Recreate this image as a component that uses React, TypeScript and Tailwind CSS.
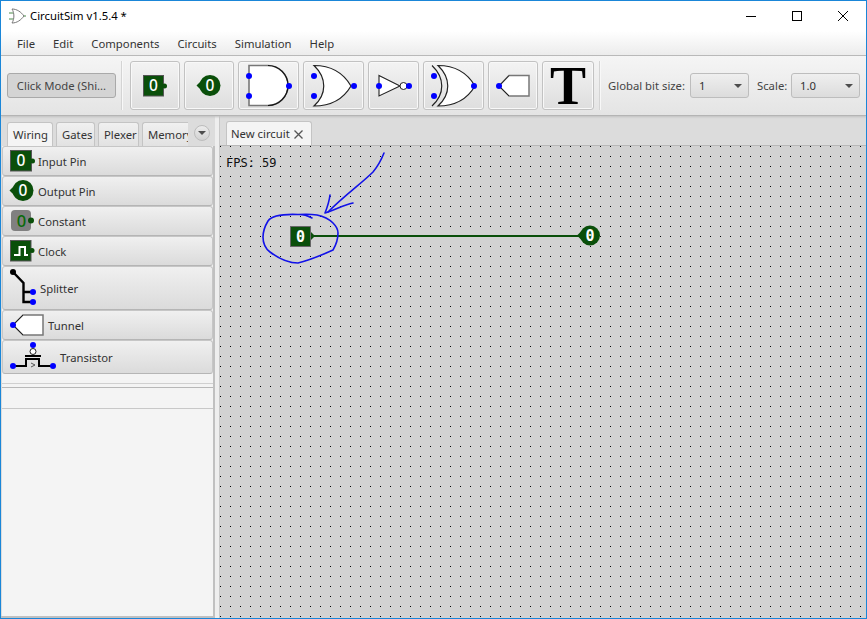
import type { ReactNode } from 'react';

const GREEN = '#0a4f0a';
const BLUE = '#0000ff';

const Dot = ({ x, y, r = 3 }: { x: number; y: number; r?: number }) => <circle cx={x} cy={y} r={r} fill={BLUE} />;

// every drawing uses the screenshot's own pixel coordinates in its viewBox
const Art = ({ x, y, w, h, children }: { x: number; y: number; w: number; h: number; children: ReactNode }) => (
  <svg width={w} height={h} viewBox={`${x} ${y} ${w} ${h}`} className="shrink-0 block">{children}</svg>
);

const PinText = ({ x, y, size = 15.5, fill = '#fff', mono = false }: { x: number; y: number; size?: number; fill?: string; mono?: boolean }) => (
  <text x={x} y={y} textAnchor="middle" fontSize={size} fill={fill} fontWeight={mono ? 700 : 500} fontFamily={mono ? "'DejaVu Sans Mono', monospace" : "'Noto Sans', sans-serif"}>0</text>
);

const InputPin = ({ bx, by, w = 21 }: { bx: number; by: number; w?: number }) => (
  <>
    <rect x={bx} y={by} width={w} height={20.5} fill={GREEN} stroke="#555" strokeWidth="1" />
    <circle cx={bx + w + 1} cy={by + 10.5} r={2.5} fill={GREEN} />
    <PinText x={bx + w / 2} y={by + 15.5} />
  </>
);

const OutputPin = ({ cx, cy, r = 10.5, mono = false }: { cx: number; cy: number; r?: number; mono?: boolean }) => (
  <>
    <circle cx={cx} cy={cy} r={r} fill={GREEN} />
    <path d={`M${cx - r - 3} ${cy} L${cx - r + 2} ${cy - 5} V${cy + 5} Z`} fill={GREEN} />
    <PinText x={cx} y={cy + 5.5} mono={mono} size={mono ? 15 : 15.5} />
  </>
);

const orPath = (l: number) => `M${l} 65.5 C${l + 18} 65.5 ${l + 30} 74 ${l + 37} 86 C${l + 30} 98 ${l + 18} 106 ${l} 106 C${l + 13} 94 ${l + 13} 78 ${l} 65.5 Z`;

const ToolButton = ({ w, children }: { w: number; children: ReactNode }) => (
  <div className="h-[49px] flex items-center justify-center rounded-[3px] border border-[#c2c2c2] bg-gradient-to-b from-[#f3f3f3] to-[#dedede] shadow-[inset_0_0_0_1px_#f8f8f8] overflow-hidden shrink-0" style={{ width: w }}>
    {children}
  </div>
);

const Combo = ({ value, width }: { value: string; width: string }) => (
  <div className={`${width} h-[25px] flex items-center justify-between pl-[8px] pr-[6px] rounded-[3px] border border-[#bdbdbd] bg-gradient-to-b from-[#efefef] to-[#dcdcdc] text-[11.3px] text-[#333]`}>
    <span className="pt-px">{value}</span>
    <span className="w-0 h-0 border-l-[4px] border-r-[4px] border-t-[4px] border-l-transparent border-r-transparent border-t-[#4d4d4d]" />
  </div>
);

const Row = ({ h, gap, label, art }: { h: string; gap: string; label: string; art: ReactNode }) => (
  <div className={`${h} ${gap} flex items-center pl-[6px] rounded-[3px] border border-[#c6c6c6] border-b-[#b5b5b5] bg-gradient-to-b from-[#f0f0f0] to-[#dbdbdb] text-[11.3px] text-[#333] shrink-0`}>
    {art}
    <span className="pt-[2px]">{label}</span>
  </div>
);

const Tab = ({ label, w, active = false, clipped = false }: { label: string; w: string; active?: boolean; clipped?: boolean }) => (
  <div className={`${w} h-[24px] flex items-center pt-[2px] pl-[5px] rounded-t-[3px] border border-b-0 border-[#c4c4c4] text-[11.3px] text-[#333] shrink-0 overflow-hidden whitespace-nowrap ${clipped ? 'border-r-0 rounded-tr-none' : ''} ${active ? 'bg-[#f4f4f4]' : 'bg-gradient-to-b from-[#f0f0f0] to-[#e2e2e2]'}`}>
    {label}
  </div>
);

const Canvas = () => (
  <svg className="w-full h-full block" viewBox="220 146 646 472">
    <defs>
      <pattern id="dots" x="220" y="146" width="10" height="10" patternUnits="userSpaceOnUse">
        <rect x="0" y="0" width="1" height="1" fill="#000" shapeRendering="crispEdges" />
      </pattern>
    </defs>
    <rect x="220" y="146" width="646" height="472" fill="#d2d2d2" />
    <rect x="220" y="146" width="646" height="472" fill="url(#dots)" />
    <text x="226" y="167" fontSize="12" fill="#111" fontFamily="'DejaVu Sans Mono', monospace">FPS: 59</text>
    <line x1="311" y1="236" x2="582" y2="236" stroke={GREEN} strokeWidth="2" />
    <rect x="290.5" y="226.5" width="20" height="20" fill={GREEN} stroke="#666" />
    <path d="M311 232 L315 236 L311 240 Z" fill={GREEN} />
    <PinText x={300.5} y={241.5} size={15} mono />
    <OutputPin cx={590} cy={235.5} r={10} mono />
    <g fill="none" stroke="#1212e8" strokeWidth="1.6" strokeLinecap="round" strokeLinejoin="round">
      <path d="M384 153 C380 163 378 166 373 172 C362 183 345 195 328 212" />
      <path d="M330 195 C329 203 327 208 325 213 C335 210 343 205 353 203" />
      <path d="M312 218 C308 216 304 214 298 214.5 C285 214 272 215 268 221 C265 226 263 231 263 237 C263 243 266 249 270 252 C278 258 288 263 298 263 C310 260 322 255 333 250 C336 245 338 239 338 233 C338 229 336 226 333 223 C328 218 322 216 317 215 C311 214 305 214 298 214.5" />
    </g>
  </svg>
);

export default function App() {
  return (
    <div className="w-[867px] h-[619px] flex flex-col overflow-hidden border border-[#1a86d8] bg-[#dcdcdc] font-['Noto_Sans',sans-serif]">
      {/* title bar */}
      <div className="h-[30px] bg-white flex items-center shrink-0">
        <div className="ml-[6px] mr-[4px]">
          <Art x={7} y={6} w={19} h={18}>
            <path d="M12 8 C17 8 21 11 24 15 C21 19 17 22 12 22 C14.5 18 14.5 12 12 8 Z" fill="#fff" stroke="#777" strokeWidth="1" />
            <path d="M9 12 H13 M9 18 H13 M24 15 H26" stroke="#4a8a4a" strokeWidth="1" />
          </Art>
        </div>
        <span className="text-[11.3px] text-black">CircuitSim v1.5.4 *</span>
        <div className="ml-auto flex">
          <div className="w-[46px] h-[30px] flex items-center justify-center">
            <svg width="10" height="10" viewBox="0 0 10 10"><path d="M0 5.5 H10" stroke="#000" /></svg>
          </div>
          <div className="w-[46px] h-[30px] flex items-center justify-center">
            <svg width="10" height="10" viewBox="0 0 10 10"><rect x="0.5" y="0.5" width="9" height="9" fill="none" stroke="#000" /></svg>
          </div>
          <div className="w-[46px] h-[30px] flex items-center justify-center">
            <svg width="10" height="10" viewBox="0 0 10 10"><path d="M0 0 L10 10 M10 0 L0 10" stroke="#000" /></svg>
          </div>
        </div>
      </div>

      {/* menu bar */}
      <div className="h-[25px] shrink-0 flex items-center pl-[16px] pt-[2px] gap-[18px] border-b border-[#b8b8b8] bg-gradient-to-b from-[#ffffff] to-[#ececec] text-[11.3px] text-[#333]">
        <span>File</span>
        <span>Edit</span>
        <span>Components</span>
        <span>Circuits</span>
        <span>Simulation</span>
        <span>Help</span>
      </div>

      {/* toolbar */}
      <div className="h-[60px] shrink-0 flex items-center pl-[6px] border-b border-[#b4b4b4] bg-gradient-to-b from-[#f5f5f5] to-[#e4e4e4] shadow-[0_1px_2px_#c0c0c0] z-10">
        <div className="w-[109px] h-[25px] flex items-center justify-center pt-px rounded-[3px] border border-[#a9a9a9] bg-[#d4d4d4] text-[11.3px] text-[#444] shrink-0">Click Mode (Shi...</div>
        <div className="w-[2px] h-[49px] ml-[5px] mr-[7px] bg-[#f8f8f8] border-l border-[#d4d4d4] shrink-0" />
        <div className="flex gap-[4px]">
          <ToolButton w={50}>
            <Art x={131} y={62} w={48} h={47}><InputPin bx={143.5} by={75.5} w={20} /></Art>
          </ToolButton>
          <ToolButton w={50}>
            <Art x={185} y={62} w={48} h={47}><OutputPin cx={210} cy={85.5} /></Art>
          </ToolButton>
          <ToolButton w={61}>
            <Art x={239} y={62} w={59} h={47}>
              <path d="M249 65.5 H268 A20 20 0 0 1 268 105.5 H249 Z" fill="#fff" stroke="#777" strokeWidth="1.6" />
              <path d="M268 65.5 A20 20 0 0 1 268 105.5" fill="none" stroke="#111" strokeWidth="1.2" />
              <Dot x={249} y={76} /><Dot x={249} y={96} /><Dot x={289} y={86} />
            </Art>
          </ToolButton>
          <ToolButton w={61}>
            <Art x={304} y={62} w={59} h={47}>
              <path d={orPath(314)} fill="#fff" stroke="#222" strokeWidth="1.2" />
              <Dot x={314} y={76} /><Dot x={314} y={96} /><Dot x={354} y={86} />
            </Art>
          </ToolButton>
          <ToolButton w={51}>
            <Art x={369} y={62} w={49} h={47}>
              <path d="M379 75.5 L400 86 L379 96 Z" fill="#fff" stroke="#222" strokeWidth="1.1" />
              <circle cx={403.5} cy={86} r={3.5} fill="#fff" stroke="#222" />
              <Dot x={379} y={86} /><Dot x={409} y={86} />
            </Art>
          </ToolButton>
          <ToolButton w={61}>
            <Art x={424} y={62} w={59} h={47}>
              <path d={orPath(438)} fill="#fff" stroke="#222" strokeWidth="1.2" />
              <path d="M432 65.5 C445 78 445 94 432 106" fill="none" stroke="#222" strokeWidth="1.2" />
              <Dot x={434} y={76} /><Dot x={434} y={96} /><Dot x={474} y={86} />
            </Art>
          </ToolButton>
          <ToolButton w={50}>
            <Art x={489} y={62} w={48} h={47}>
              <path d="M499 86 L509 75.5 H529 V96 H509 Z" fill="#fff" stroke="#777" strokeWidth="1.5" />
              <path d="M509 75.5 L499 86 L509 96" fill="none" stroke="#222" strokeWidth="1" />
              <Dot x={499} y={86} />
            </Art>
          </ToolButton>
          <ToolButton w={52}>
            <span className="font-['Liberation_Serif',serif] font-bold text-[54px] leading-none text-black">T</span>
          </ToolButton>
        </div>
        <div className="w-[2px] h-[49px] ml-[5px] bg-[#f8f8f8] border-l border-[#d4d4d4] shrink-0" />
        <span className="w-[79px] ml-[7px] pt-px text-[11.3px] text-[#444] whitespace-nowrap shrink-0">Global bit size:</span>
        <div className="ml-[3px]"><Combo value="1" width="w-[59px]" /></div>
        <span className="w-[31px] ml-[8px] pt-px text-[11.3px] text-[#444] shrink-0">Scale:</span>
        <div className="ml-[3px]"><Combo value="1.0" width="w-[69px]" /></div>
      </div>

      {/* body */}
      <div className="flex-1 min-h-0 flex">
        {/* left panel */}
        <div className="w-[214px] shrink-0 flex flex-col pl-[1px] border-b-2 border-[#c0c0c0]">
          <div className="h-[30px] shrink-0 flex items-end pl-[5px] gap-[3px] relative">
            <Tab label="Wiring" w="w-[46px]" active />
            <Tab label="Gates" w="w-[39px]" />
            <Tab label="Plexer" w="w-[41px]" />
            <Tab label="Memory" w="w-[46px]" clipped />
            <div className="absolute left-[192px] top-[9px] w-[16px] h-[16px] rounded-full border border-[#bcbcbc] bg-gradient-to-b from-[#ececec] to-[#d2d2d2] flex items-center justify-center">
              <span className="w-0 h-0 border-l-[4px] border-r-[4px] border-t-[4px] border-l-transparent border-r-transparent border-t-[#4d4d4d]" />
            </div>
          </div>
          <div className="flex-1 min-h-0 flex flex-col bg-[#f4f4f4] border-r-2 border-[#c0c0c0]">
            <Row h="h-[30px]" gap="gap-[3px]" label="Input Pin" art={<Art x={9} y={149} w={26} h={24}><InputPin bx={10.5} by={150.5} /></Art>} />
            <Row h="h-[30px]" gap="gap-[3px]" label="Output Pin" art={<Art x={9} y={179} w={26} h={24}><OutputPin cx={23} cy={190.5} r={10.5} /></Art>} />
            <Row h="h-[30px]" gap="gap-[3px]" label="Constant" art={
              <Art x={9} y={209} w={26} h={24}>
                <rect x="11" y="210" width="20" height="21" rx="4" fill="#808080" />
                <circle cx={31} cy={220.5} r={3} fill={GREEN} />
                <PinText x={21.5} y={226.5} size={16.5} fill="#0a6a0a" />
              </Art>
            } />
            <Row h="h-[30px]" gap="gap-[3px]" label="Clock" art={
              <Art x={9} y={239} w={26} h={24}>
                <rect x="10.5" y="240.5" width="20.5" height="20.5" fill={GREEN} stroke="#555" />
                <circle cx={32} cy={250.5} r={2.5} fill={GREEN} />
                <path d="M14 255 H19.5 V247 H25 V255 H28" fill="none" stroke="#fff" strokeWidth="2" />
              </Art>
            } />
            <Row h="h-[44px]" gap="gap-[1px]" label="Splitter" art={
              <Art x={9} y={269} w={30} h={40}>
                <path d="M13 273 L23.5 284 V303 H33 M23.5 293 H33" fill="none" stroke="#000" strokeWidth="2.4" />
                <circle cx={13} cy={273} r={3} fill="#000" />
                <Dot x={33} y={293} /><Dot x={33} y={303} />
              </Art>
            } />
            <Row h="h-[30px]" gap="gap-[4px]" label="Tunnel" art={
              <Art x={9} y={313} w={35} h={24}>
                <path d="M13 325 L23 315 H43 V335 H23 Z" fill="#fff" stroke="#777" strokeWidth="1.5" />
                <path d="M23 315 L13 325 L23 335" fill="none" stroke="#222" strokeWidth="1" />
                <Dot x={13} y={325} />
              </Art>
            } />
            <Row h="h-[34px]" gap="gap-[2px]" label="Transistor" art={
              <Art x={9} y={343} w={49} h={30}>
                <path d="M13 367 H26 V360 H39 V367 H53" fill="none" stroke="#000" strokeWidth="2" />
                <path d="M25 357 H41" stroke="#000" strokeWidth="2" />
                <path d="M31 364 L35 366 L31 368" fill="none" stroke="#555" strokeWidth="1" />
                <circle cx={33} cy={352.5} r={3} fill="#fff" stroke="#222" />
                <Dot x={33} y={346} /><Dot x={13} y={367} /><Dot x={53} y={367} />
              </Art>
            } />
            <div className="h-[10px] shrink-0 border-b border-[#d0d0d0]" />
            <div className="h-[4px] shrink-0 border-b border-[#b8b8b8]" />
            <div className="h-[21px] shrink-0 border-b border-[#c8c8c8]" />
            <div className="flex-1" />
          </div>
        </div>

        {/* splitter */}
        <div className="w-[5px] shrink-0 bg-[#eeeeee] border-r border-[#c8c8c8]" />

        {/* circuit tabs + canvas */}
        <div className="flex-1 min-w-0 flex flex-col">
          <div className="h-[30px] shrink-0 flex items-end pl-[6px] border-b border-[#b8b8b8]">
            <div className="w-[86px] h-[24px] flex items-center pt-[2px] pl-[4px] gap-[4px] rounded-t-[3px] border border-b-0 border-[#c4c4c4] bg-[#f4f4f4] text-[11.3px] text-[#333] whitespace-nowrap">
              New circuit
              <svg width="9" height="9" viewBox="0 0 9 9"><path d="M0.5 0.5 L8.5 8.5 M8.5 0.5 L0.5 8.5" stroke="#555" strokeWidth="1.3" /></svg>
            </div>
          </div>
          <div className="flex-1 min-h-0"><Canvas /></div>
        </div>
      </div>
    </div>
  );
}
